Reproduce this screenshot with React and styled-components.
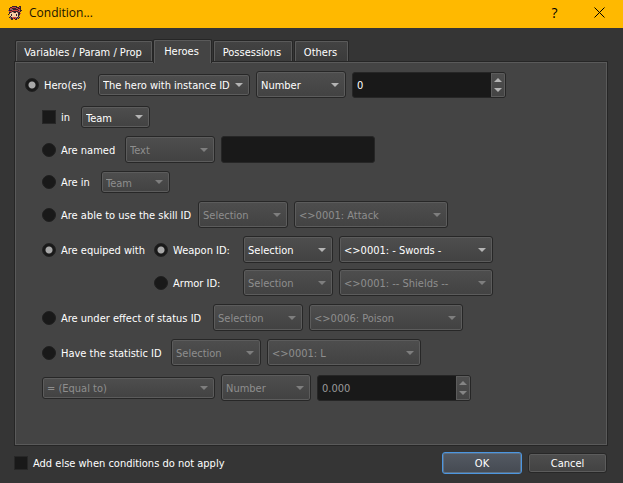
import React from 'react';
import styled, { createGlobalStyle, css } from 'styled-components';

const GlobalStyle = createGlobalStyle`
  * { box-sizing: border-box; }
  body { margin: 0; background: #353535; }
  body, button, input, select {
    font-family: "DejaVu Sans Condensed", Tahoma, sans-serif;
    font-size: 11px;
    color: #ffffff;
  }
`;

const raised = css`
  border: 1px solid #272727;
  border-radius: 3px;
  background: linear-gradient(#4e4e4e, #424242);
  box-shadow: inset 0 0 0 1px #5c5c5c;
`;

const Dialog = styled.div`
  display: flex;
  flex-direction: column;
  min-height: 100vh;
  background: #353535;
`;

const TitleBar = styled.header`
  display: flex;
  align-items: center;
  height: 28px;
  padding: 0 1px 3px 8px;
  background: #ffb900;
  color: #1a1400;
`;

const Title = styled.h1`
  flex: 1;
  margin: 0 0 0 7px;
  font: 400 12px/16px "Open Sans", "Segoe UI", sans-serif;
`;

const TitleButton = styled.button`
  display: grid;
  place-items: center;
  width: 45px;
  height: 24px;
  padding: 0;
  border: 0;
  background: none;
  color: #000000;
  font-family: "Open Sans", "Segoe UI", sans-serif;
  font-size: 14px;
`;

const Tabs = styled.div`
  display: flex;
  align-items: flex-end;
  gap: 1px;
  padding: 11px 15px 0;
`;

const Tab = styled.button`
  position: relative;
  height: ${(p) => (p.$active ? 24 : 21)}px;
  width: ${(p) => p.$width}px;
  margin: ${(p) => (p.$active ? '0 0 -2px -1px' : '0')};
  padding: ${(p) => (p.$active ? '0 2px 0 0' : '2px 2px 0 0')};
  border: 1px solid #262626;
  border-bottom: 0;
  border-radius: 2px 2px 0 0;
  background: ${(p) => (p.$active ? '#444444' : 'linear-gradient(#434343, #3b3b3b)')};
  box-shadow: inset 1px 1px #5a5a5a, inset -1px 0 #5a5a5a;
  z-index: ${(p) => (p.$active ? 1 : 0)};
  white-space: nowrap;
`;

const Panel = styled.section`
  display: flex;
  flex: 1;
  flex-direction: column;
  gap: 8px;
  margin: 0 15px 0 14px;
  padding: 9px 9px 44px;
  border: 1px solid #262626;
  background: #444444;
  box-shadow: inset 0 0 0 1px #5a5a5a;
`;

const Row = styled.div`
  display: flex;
  align-items: center;
  gap: 6px;
  padding-left: ${(p) => (p.$top ? 1 : 18)}px;
`;

const Line = styled.div`
  display: flex;
  align-items: center;
  gap: 6px;
`;

const Equipment = styled.div`
  display: grid;
  gap: 6px;
`;

const EquipmentRow = styled(Row)`
  align-items: flex-start;
`;

const Choice = styled.label`
  display: flex;
  align-items: center;
  gap: 5px;
  min-width: ${(p) => p.$width || 0}px;
  padding-top: 2px;
  line-height: 25px;
  white-space: nowrap;
`;

const SlimChoice = styled(Choice)`
  line-height: 20px;
`;

const Radio = styled.input.attrs({ type: 'radio' })`
  appearance: none;
  flex: none;
  width: 14px;
  height: 14px;
  margin: 0 0 2px;
  border: 1px solid #202020;
  border-radius: 50%;
  background: #191919;
  &:checked { background: radial-gradient(circle, #a8a8a8 3px, #191919 4px); }
`;

const Check = styled.input.attrs({ type: 'checkbox' })`
  appearance: none;
  flex: none;
  width: 14px;
  height: 14px;
  margin: 0 0 2px;
  border: 1px solid #272727;
  background: #191919;
  &:checked { background: #a8a8a8; }
`;

const SelectBox = styled.div`
  display: grid;
  align-items: center;
  width: ${(p) => p.$width}px;
  > * { grid-area: 1 / 1; }
  > svg { justify-self: end; margin-right: 7px; pointer-events: none; fill: #b4b4b4; }
  > select:disabled + svg { fill: #7e7e7e; }
`;

const Select = styled.select`
  ${raised}
  appearance: none;
  width: 100%;
  height: ${(p) => (p.$slim ? 22 : 27)}px;
  padding: 2px 16px 0 4px;
  &:disabled { color: #8e8e8e; opacity: 1; }
`;

const sunken = css`
  border: 1px solid #262626;
  border-radius: 3px;
  background: #191919;
`;

const TextField = styled.input`
  ${sunken}
  width: 154px;
  height: 27px;
  padding: 0 4px;
`;

const SpinBox = styled.div`
  ${sunken}
  display: flex;
  width: 154px;
  height: 26px;
  overflow: hidden;
`;

const SpinInput = styled.input`
  flex: 1;
  min-width: 0;
  padding: 2px 4px 0;
  border: 0;
  background: none;
  &:disabled { color: #9a9a9a; }
`;

const SpinButtons = styled.div`
  display: flex;
  flex-direction: column;
  width: 14px;
  padding: 2px 0;
  background: linear-gradient(#4e4e4e, #444444);
  box-shadow: inset 0 0 0 1px #5c5c5c;
`;

const SpinButton = styled.button`
  display: grid;
  place-items: center;
  flex: 1;
  padding: 0;
  border: 0;
  background: none;
  fill: #b4b4b4;
  &:disabled { fill: #858585; }
`;

const Footer = styled.footer`
  display: flex;
  align-items: center;
  gap: 6px;
  padding: 6px 16px 9px 14px;
`;

const ElseChoice = styled(Choice)`
  flex: 1;
  line-height: 20px;
`;

const Button = styled.button`
  ${raised}
  width: ${(p) => (p.$primary ? 80 : 79)}px;
  height: ${(p) => (p.$primary ? 22 : 20)}px;
  padding: 0;
  ${(p) =>
    p.$primary &&
    css`
      border-color: #4c96e0;
      background: linear-gradient(#545a63, #454a52);
      box-shadow: inset 0 0 0 1px #5d7085;
    `}
`;

const Arrow = ({ up }) => (
  <svg width="8" height="4" viewBox="0 0 8 4" aria-hidden="true">
    <path d={up ? 'M0 4L4 0L8 4Z' : 'M0 0H8L4 4Z'} />
  </svg>
);

const Combo = ({ label, value, width = 90, slim, disabled }) => (
  <SelectBox $width={width}>
    <Select $slim={slim} disabled={disabled} aria-label={label} defaultValue={value}>
      <option>{value}</option>
    </Select>
    <Arrow />
  </SelectBox>
);

const Spin = ({ label, value, disabled }) => (
  <SpinBox>
    <SpinInput aria-label={label} defaultValue={value} disabled={disabled} />
    <SpinButtons>
      <SpinButton aria-label="Increase" disabled={disabled}><Arrow up /></SpinButton>
      <SpinButton aria-label="Decrease" disabled={disabled}><Arrow /></SpinButton>
    </SpinButtons>
  </SpinBox>
);

const heroPixels = [
  '....kkkkk..kk.',
  '..kkrrrgkkkrk.',
  '.krrkkkkrrkkk.',
  '.kgggkkkkkrrk.',
  'gkkkrrrrrrkgkk',
  '.rrrkkkkkkrrk.',
  '.kkgpskkpgkk..',
  '.kppppppppkkr.',
  'k.pkppppkpkk..',
  '..pkppppkpkg..',
  '..kpppppppk...',
  '.kgksrrrskgk..',
  '..gkkrkrkgk...',
  '...kk..kk.....',
];
const heroColors = { k: '#3a2228', r: '#d0413f', g: '#8a6a74', p: '#f7cfa6', s: '#b9785c' };

const HeroIcon = () => (
  <svg width="14" height="14" viewBox="0 0 14 14" shapeRendering="crispEdges" aria-hidden="true">
    {heroPixels.flatMap((line, y) =>
      [...line].map((c, x) =>
        c === '.' ? null : <rect key={`${x}-${y}`} x={x} y={y} width="1" height="1" fill={heroColors[c]} />
      )
    )}
  </svg>
);

export default function App() {
  return (
    <Dialog>
      <GlobalStyle />
      <TitleBar>
        <HeroIcon />
        <Title>Condition...</Title>
        <TitleButton aria-label="Help">?</TitleButton>
        <TitleButton aria-label="Close">
          <svg width="11" height="11" viewBox="0 0 11 11" fill="none" stroke="#000000">
            <path d="M0.5 0.5L10.5 10.5M10.5 0.5L0.5 10.5" />
          </svg>
        </TitleButton>
      </TitleBar>
      <Tabs role="tablist">
        <Tab role="tab" $width={138}>Variables / Param / Prop</Tab>
        <Tab role="tab" aria-selected="true" $active $width={59}>Heroes</Tab>
        <Tab role="tab" $width={80}>Possessions</Tab>
        <Tab role="tab" $width={55}>Others</Tab>
      </Tabs>
      <Panel role="tabpanel">
        <Row $top>
          <Choice $width={67}><Radio name="hero" defaultChecked />Hero(es)</Choice>
          <Combo label="Hero source" value="The hero with instance ID" width={152} slim />
          <Combo label="Instance ID type" value="Number" />
          <Spin label="Instance ID" value="0" />
        </Row>
        <Row>
          <SlimChoice $width={33}><Check />in</SlimChoice>
          <Combo label="Group" value="Team" width={69} slim />
        </Row>
        <Row>
          <Choice $width={77}><Radio name="test" />Are named</Choice>
          <Combo label="Name type" value="Text" disabled />
          <TextField aria-label="Name" disabled />
        </Row>
        <Row>
          <SlimChoice $width={53}><Radio name="test" />Are in</SlimChoice>
          <Combo label="Are in group" value="Team" width={69} slim disabled />
        </Row>
        <Row>
          <Choice $width={150}><Radio name="test" />Are able to use the skill ID</Choice>
          <Combo label="Skill type" value="Selection" disabled />
          <Combo label="Skill" value="<>0001: Attack" width={154} disabled />
        </Row>
        <EquipmentRow>
          <Choice $width={106}><Radio name="test" defaultChecked />Are equiped with</Choice>
          <Equipment>
            <Line>
              <Choice $width={83}><Radio name="equipment" defaultChecked />Weapon ID:</Choice>
              <Combo label="Weapon type" value="Selection" />
              <Combo label="Weapon" value="<>0001: - Swords -" width={154} />
            </Line>
            <Line>
              <Choice $width={83}><Radio name="equipment" />Armor ID:</Choice>
              <Combo label="Armor type" value="Selection" disabled />
              <Combo label="Armor" value="<>0001: -- Shields --" width={154} disabled />
            </Line>
          </Equipment>
        </EquipmentRow>
        <Row>
          <Choice $width={165}><Radio name="test" />Are under effect of status ID</Choice>
          <Combo label="Status type" value="Selection" disabled />
          <Combo label="Status" value="<>0006: Poison" width={154} disabled />
        </Row>
        <Row>
          <Choice $width={123}><Radio name="test" />Have the statistic ID</Choice>
          <Combo label="Statistic type" value="Selection" disabled />
          <Combo label="Statistic" value="<>0001: L" width={154} disabled />
        </Row>
        <Row>
          <Combo label="Comparison" value="= (Equal to)" width={173} slim disabled />
          <Combo label="Value type" value="Number" disabled />
          <Spin label="Value" value="0.000" disabled />
        </Row>
      </Panel>
      <Footer>
        <ElseChoice><Check />Add else when conditions do not apply</ElseChoice>
        <Button $primary>OK</Button>
        <Button>Cancel</Button>
      </Footer>
    </Dialog>
  );
}
